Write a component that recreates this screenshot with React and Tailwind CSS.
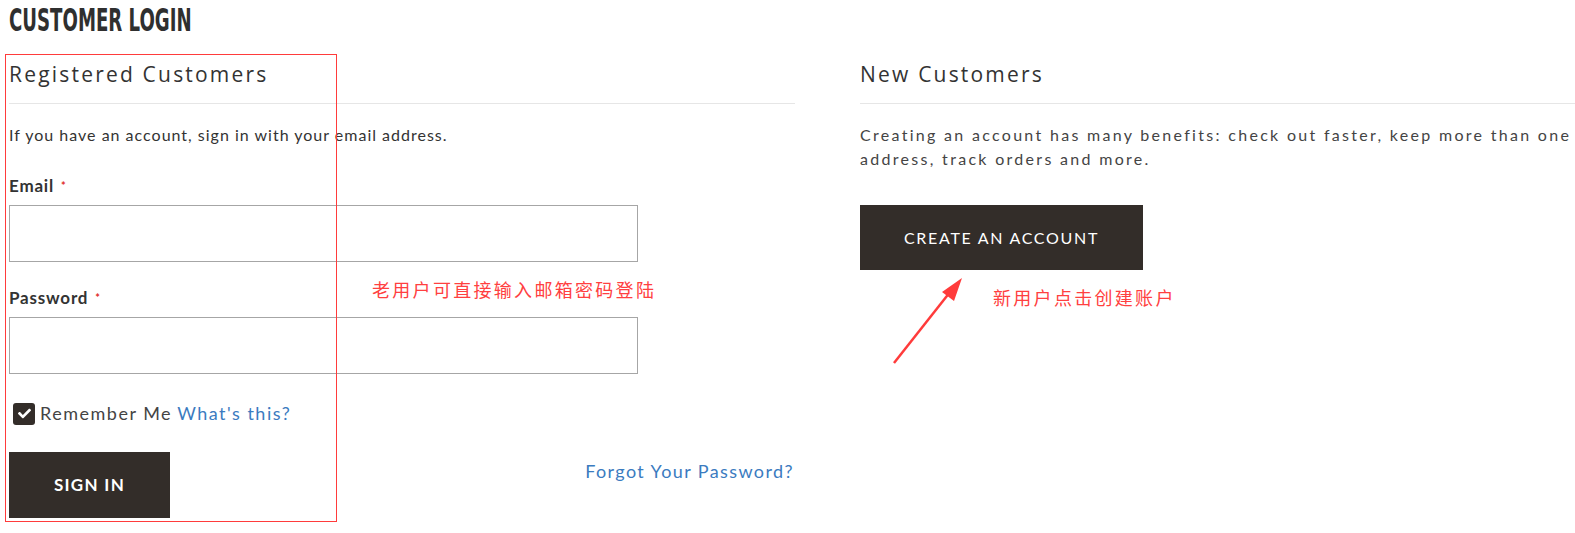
import { FaCheck } from "react-icons/fa";

const body = { fontFamily: "Lato, 'Open Sans', sans-serif" };
const head = { fontFamily: "'Open Sans', Lato, sans-serif" };
const cjk = { fontFamily: "'Noto Sans CJK SC', sans-serif" };

const Field = ({ label, top }) => (
  <div className={top}>
    <label className="block text-[17px] font-bold text-[#333] tracking-[0.8px] leading-6" style={body}>
      {label} <span className="text-[#e02b27] text-[11px] align-top ml-0.5">*</span>
    </label>
    <div className="mt-[7px] h-[57px] w-[629px] border border-[#a6a6a6] bg-white" />
  </div>
);

const App = () => {
  return (
    <div className="relative w-[1575px] h-[533px] overflow-hidden bg-white text-[#333]">
      <h1
        className="ml-[9px] pt-[2px] inline-block origin-left scale-x-[0.63] text-[32px] leading-[36px] font-bold text-[#2f2f2f]"
        style={{ fontFamily: "'DejaVu Sans', sans-serif", fontStretch: "condensed" }}
      >
        CUSTOMER LOGIN
      </h1>

      <div className="flex gap-[65px] pl-[9px] pt-[20px]">
        <div className="w-[786px] shrink-0">
          <h2 className="text-[21px] leading-[32px] tracking-[2.2px] text-[#333]" style={head}>
            Registered Customers
          </h2>
          <div className="mt-[13px] border-t border-[#e6e6e6]" />
          <p className="mt-[19px] text-[16px] leading-6 tracking-[1px] text-[#333]" style={body}>
            If you have an account, sign in with your email address.
          </p>
          <Field label="Email" top="mt-[27px]" />
          <Field label="Password" top="mt-[24px]" />
          <div className="mt-[26px] flex items-center gap-[5px] pl-[4px] text-[18px] tracking-[1.5px]" style={body}>
            <span className="flex h-[22px] w-[22px] items-center justify-center rounded-[3px] bg-[#332d29] text-white">
              <FaCheck className="h-[13px] w-[13px]" />
            </span>
            <span className="text-[#444]">Remember Me</span>
            <a className="text-[#3b7bbf]">What's this?</a>
          </div>
          <div className="mt-[25px] flex items-start justify-between">
            <button className="h-[66px] w-[161px] bg-[#332d29] text-[17px] font-bold tracking-[1.3px] text-white" style={body}>
              SIGN IN
            </button>
            <a className="mt-[6px] mr-[1px] text-[18px] tracking-[1.4px] text-[#3b7bbf]" style={body}>
              Forgot Your Password?
            </a>
          </div>
        </div>

        <div className="w-[786px] shrink-0">
          <h2 className="text-[21px] leading-[32px] tracking-[2.2px] text-[#333]" style={head}>
            New Customers
          </h2>
          <div className="mt-[13px] border-t border-[#e6e6e6]" />
          <p className="mt-[19px] w-[712px] text-[16px] leading-6 tracking-[2.3px] text-[#444]" style={body}>
            Creating an account has many benefits: check out faster, keep more than one address, track orders and more.
          </p>
          <button className="mt-[34px] h-[65px] w-[283px] bg-[#332d29] text-[16px] tracking-[1.7px] text-white" style={body}>
            CREATE AN ACCOUNT
          </button>
        </div>
      </div>

      {/* annotations */}
      <div className="absolute left-[5px] top-[54px] h-[468px] w-[332px] border border-[#ff3b3b]" />
      <div className="absolute left-[372px] top-[276px] text-[18px] tracking-[2.3px] text-[#ff4040]" style={cjk}>
        老用户可直接输入邮箱密码登陆
      </div>
      <div className="absolute left-[993px] top-[284px] text-[18px] tracking-[2.3px] text-[#ff4040]" style={cjk}>
        新用户点击创建账户
      </div>
      <svg className="absolute left-[884px] top-[270px]" width="90" height="100" viewBox="0 0 90 100">
        <line x1="10" y1="93" x2="70" y2="17" stroke="#ff3b3b" strokeWidth="2.5" />
        <polygon points="78,8 58,22 70,31" fill="#ff3b3b" />
      </svg>
    </div>
  );
};

export default App;
